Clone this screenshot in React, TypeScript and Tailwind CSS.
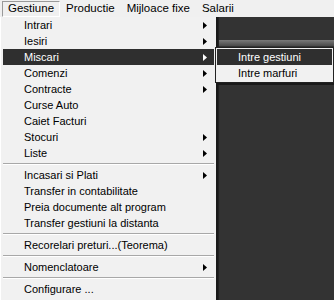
const font = "font-['Liberation_Sans',Arial,sans-serif]";

type Item = { label: string; sub?: boolean; active?: boolean } | 'sep';

const items: Item[] = [
  { label: 'Intrari', sub: true },
  { label: 'Iesiri', sub: true },
  { label: 'Miscari', sub: true, active: true },
  { label: 'Comenzi', sub: true },
  { label: 'Contracte', sub: true },
  { label: 'Curse Auto' },
  { label: 'Caiet Facturi' },
  { label: 'Stocuri', sub: true },
  { label: 'Liste', sub: true },
  'sep',
  { label: 'Incasari si Plati', sub: true },
  { label: 'Transfer in contabilitate' },
  { label: 'Preia documente alt program' },
  { label: 'Transfer gestiuni la distanta' },
  'sep',
  { label: 'Recorelari preturi...(Teorema)' },
  'sep',
  { label: 'Nomenclatoare', sub: true },
  'sep',
  { label: 'Configurare ...' },
];

function Arrow({ white }: { white?: boolean }) {
  return (
    <svg width="4" height="7" viewBox="0 0 4 7" className="shrink-0">
      <path d="M0 0L4 3.5L0 7Z" fill={white ? '#ffffff' : '#000000'} />
    </svg>
  );
}

export default function App() {
  return (
    <div className={`${font} relative w-[334px] h-[300px] overflow-hidden bg-[#333333] text-[11px] text-black`}>
      {/* menu bar */}
      <div className="flex h-[17px] items-center bg-[#f0f0f0] pl-[2px] text-[11.5px]">
        <div className="flex h-[16px] items-center border border-t-[#9a9a9a] border-l-[#9a9a9a] border-r-white border-b-white px-[5px]">
          Gestiune
        </div>
        <div className="px-[6px]">Productie</div>
        <div className="px-[6px]">Mijloace fixe</div>
        <div className="px-[6px]">Salarii</div>
      </div>

      <div className="flex">
        {/* main dropdown */}
        <div className="w-[218px] h-[283px] bg-[#f1f1f1] border-l border-white border-r-2 border-r-[#1a1a1a] px-[2px]">
          {items.map((it, i) =>
            it === 'sep' ? (
              <div key={i} className="flex h-[6px] items-center">
                <div className="w-full border-t border-[#a8a8a8] border-b border-b-white" />
              </div>
            ) : (
              <div
                key={i}
                className={`flex h-[16px] items-center pl-[21px] pr-[7px] ${
                  it.active ? 'bg-[#2f2f2f] text-white' : ''
                }`}
              >
                <span className="flex-1 whitespace-nowrap">{it.label}</span>
                {it.sub && <Arrow white={it.active} />}
              </div>
            )
          )}
        </div>

        {/* dark area behind */}
        <div className="flex-1 flex flex-col border-l border-[#222222]">
          <div className="h-[23px]" />
          <div className="h-[6px] bg-gradient-to-b from-[#7a7a7a] to-[#4a4a4a]" />
        </div>
      </div>

      {/* submenu */}
      <div className="absolute left-[215px] top-[47px] w-[119px] bg-[#f1f1f1] border border-[#222222] p-[1px] shadow-[2px_2px_0_#1a1a1a]">
        <div className="flex h-[16px] items-center bg-[#2f2f2f] pl-[21px] text-white whitespace-nowrap">Intre gestiuni</div>
        <div className="flex h-[16px] items-center pl-[21px] whitespace-nowrap">Intre marfuri</div>
      </div>
    </div>
  );
}
